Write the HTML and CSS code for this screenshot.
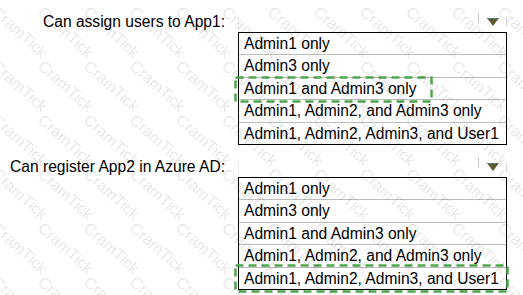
FILE: index.html
```html
<!DOCTYPE html>
<html lang="en">
<head>
    <meta charset="UTF-8">
    <meta name="viewport" content="width=device-width, initial-scale=1.0">
    <title>Answer Area</title>
    <link rel="stylesheet" href="styles.css">
</head>
<body>
    <div class="page">
        <!-- Question 1 -->
        <div class="question">
            <div class="prompt">Can assign users to App1:</div>
            <div class="dropdown">
                <div class="dropdown-head">
                    <span class="divider"></span>
                    <svg class="arrow" width="12" height="8" viewBox="0 0 12 8">
                        <polygon points="0,0 12,0 6,8" fill="#5e5a2c"/>
                        <rect x="0" y="0" width="12" height="1" fill="#4f7f80"/>
                    </svg>
                </div>
                <ul class="options">
                    <li>Admin1 only</li>
                    <li>Admin3 only</li>
                    <li class="picked">Admin1 and Admin3 only
                        <svg class="mark mark-short" width="199" height="27" viewBox="0 0 199 27">
                            <rect x="1.5" y="1.5" width="196" height="24" fill="none" stroke="#4ea64e" stroke-width="2.5" stroke-dasharray="8 5"/>
                        </svg>
                    </li>
                    <li>Admin1, Admin2, and Admin3 only</li>
                    <li>Admin1, Admin2, Admin3, and User1</li>
                </ul>
            </div>
        </div>

        <!-- Question 2 -->
        <div class="question">
            <div class="prompt">Can register App2 in Azure AD:</div>
            <div class="dropdown">
                <div class="dropdown-head">
                    <span class="divider"></span>
                    <svg class="arrow" width="12" height="8" viewBox="0 0 12 8">
                        <polygon points="0,0 12,0 6,8" fill="#5e5a2c"/>
                        <rect x="0" y="0" width="12" height="1" fill="#4f7f80"/>
                    </svg>
                </div>
                <ul class="options">
                    <li>Admin1 only</li>
                    <li>Admin3 only</li>
                    <li>Admin1 and Admin3 only</li>
                    <li>Admin1, Admin2, and Admin3 only</li>
                    <li class="picked">Admin1, Admin2, Admin3, and User1
                        <svg class="mark mark-long" width="275" height="29" viewBox="0 0 275 29">
                            <rect x="1.5" y="1.5" width="272" height="26" fill="none" stroke="#4ea64e" stroke-width="2.5" stroke-dasharray="8 5"/>
                        </svg>
                    </li>
                </ul>
            </div>
        </div>

        <div class="watermark" id="watermark"></div>
    </div>

    <script>
        // Fill the watermark layer with repeated labels
        var watermark = document.getElementById('watermark');
        for (var i = 0; i < 72; i++) {
            var span = document.createElement('span');
            span.textContent = 'CramTick';
            watermark.appendChild(span);
        }
    </script>
</body>
</html>
```

FILE: styles.css
```css
body {
    font-family: "Liberation Sans", Arial, sans-serif;
    margin: 0;
    padding: 0;
    background-color: #fff;
    color: #000;
}

.page {
    position: relative;
    width: 523px;
    height: 295px;
    overflow: hidden;
    padding-top: 14px;
    box-sizing: border-box;
}

.question {
    display: grid;
    grid-template-columns: 225px 269px;
    column-gap: 13px;
    align-items: start;
}

.question + .question {
    margin-top: 14px;
}

.prompt {
    font-size: 15.6px;
    line-height: 18px;
    text-align: right;
    margin-top: -1px;
    white-space: nowrap;
}

.dropdown-head {
    height: 18px;
    display: flex;
    justify-content: flex-end;
    align-items: flex-start;
    padding-right: 8px;
    border-left: 1px solid #ebebeb;
    box-sizing: border-box;
    position: relative;
}

.dropdown-head::after {
    content: "";
    position: absolute;
    right: 0;
    top: 4px;
    height: 8px;
    border-right: 1px solid #d6d6d6;
}

.divider {
    width: 1px;
    height: 10px;
    margin-top: -1px;
    margin-right: 8px;
    background-color: #c8c8c8;
}

.arrow {
    display: block;
    margin-top: 4px;
}

.options {
    list-style: none;
    margin: 0;
    padding: 0;
    border: 1px solid #000;
}

.options li {
    position: relative;
    height: 21.4px;
    line-height: 22px;
    padding-left: 5px;
    font-size: 15.6px;
    white-space: nowrap;
}

.options li + li {
    border-top: 1px solid #bdbdbd;
}

.mark {
    position: absolute;
    left: -5px;
    display: block;
}

.mark-short {
    top: -2px;
}

.mark-long {
    top: -4px;
}

.watermark {
    position: absolute;
    top: -8px;
    left: -6px;
    display: grid;
    grid-template-columns: repeat(12, 46px);
    grid-auto-rows: 54px;
    pointer-events: none;
}

.watermark span {
    display: block;
    font-size: 16px;
    color: rgba(0, 0, 0, 0.11);
    transform: rotate(42deg) translate(12px, 4px);
    transform-origin: left top;
    white-space: nowrap;
}
```
